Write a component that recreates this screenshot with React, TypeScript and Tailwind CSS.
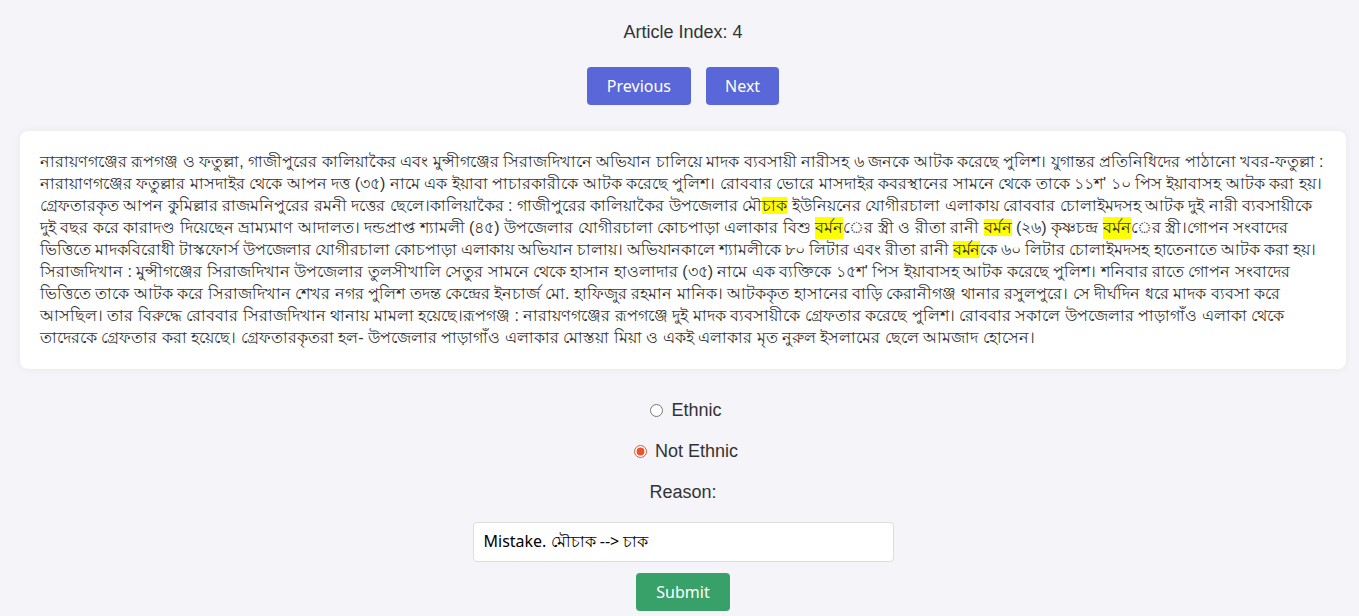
import { useState } from 'react'

// marks followed by a vowel sign are shaped apart, as in the source page
const hl = (s: string, apart = false) => (
  <mark className={apart ? 'inline-block bg-[#ffff00] text-[#333]' : 'bg-[#ffff00] text-[#333]'}>{s}</mark>
)

function Article() {
  return (
    <p className="text-[16px] leading-[22px] text-[#333]">
      নারায়ণগঞ্জের রূপগঞ্জ ও ফতুল্লা, গাজীপুরের কালিয়াকৈর এবং মুন্সীগঞ্জের সিরাজদিখানে অভিযান চালিয়ে মাদক ব্যবসায়ী নারীসহ ৬ জনকে আটক করেছে পুলিশ। যুগান্তর প্রতিনিধিদের পাঠানো খবর-ফতুল্লা : নারায়াণগঞ্জের ফতুল্লার মাসদাইর থেকে আপন দত্ত (৩৫) নামে এক ইয়াবা পাচারকারীকে আটক করেছে পুলিশ। রোববার ভোরে মাসদাইর কবরস্থানের সামনে থেকে তাকে ১১শ' ১০ পিস ইয়াবাসহ আটক করা হয়। গ্রেফতারকৃত আপন কুমিল্লার রাজমনিপুরের রমনী দত্তের ছেলে।কালিয়াকৈর : গাজীপুরের কালিয়াকৈর উপজেলার মৌ{hl('চাক')} ইউনিয়নের যোগীরচালা এলাকায় রোববার চোলাইমদসহ আটক দুই নারী ব্যবসায়ীকে দুই বছর করে কারাদণ্ড দিয়েছেন ভ্রাম্যমাণ আদালত। দন্ডপ্রাপ্ত শ্যামলী (৪৫) উপজেলার যোগীরচালা কোচপাড়া এলাকার বিশু {hl('বর্মন', true)}ের স্ত্রী ও রীতা রানী {hl('বর্মন')} (২৬) কৃষ্ণচন্দ্র {hl('বর্মন', true)}ের স্ত্রী।গোপন সংবাদের{' '}
      <span className="tracking-[-0.15px]">
        ভিত্তিতে মাদকবিরোধী টাস্কফোর্স উপজেলার যোগীরচালা কোচপাড়া এলাকায় অভিযান চালায়। অভিযানকালে শ্যামলীকে ৮০ লিটার এবং রীতা রানী {hl('বর্মন')}কে ৬০ লিটার চোলাইমদসহ হাতেনাতে আটক করা হয়।
      </span>{' '}
      সিরাজদিখান : মুন্সীগঞ্জের সিরাজদিখান উপজেলার তুলসীখালি সেতুর সামনে থেকে হাসান হাওলাদার (৩৫) নামে এক ব্যক্তিকে ১৫শ' পিস ইয়াবাসহ আটক করেছে পুলিশ। শনিবার রাতে গোপন সংবাদের ভিত্তিতে তাকে আটক করে সিরাজদিখান শেখর নগর পুলিশ তদন্ত কেন্দ্রের ইনচার্জ মো. হাফিজুর রহমান মানিক। আটককৃত হাসানের বাড়ি কেরানীগঞ্জ থানার রসুলপুরে। সে দীর্ঘদিন ধরে মাদক ব্যবসা করে আসছিল। তার বিরুদ্ধে রোববার সিরাজদিখান থানায় মামলা হয়েছে।রূপগঞ্জ : নারায়ণগঞ্জের রূপগঞ্জে দুই মাদক ব্যবসায়ীকে গ্রেফতার করেছে পুলিশ। রোববার সকালে উপজেলার পাড়াগাঁও এলাকা থেকে তাদেরকে গ্রেফতার করা হয়েছে। গ্রেফতারকৃতরা হল- উপজেলার পাড়াগাঁও এলাকার মোস্তয়া মিয়া ও একই এলাকার মৃত নুরুল ইসলামের ছেলে আমজাদ হোসেন।
    </p>
  )
}

export default function App() {
  const [choice, setChoice] = useState('not')
  const [reason, setReason] = useState('Mistake. মৌচাক --> চাক')

  return (
    <div className="w-full min-h-[616px] overflow-hidden bg-[#f4f4f9]">
      <div className="w-[1366px] flex flex-col items-center pt-[21px] text-[#333] font-['Liberation_Sans',Arial,sans-serif]">
        <h2 className="text-[18px] leading-[22px]">Article Index: 4</h2>

        <div className="flex gap-[15px] mt-[24px] font-['Noto_Sans',sans-serif]">
          <button className="h-[38px] px-[20px] rounded-[4px] bg-[#5a67d8] text-white text-[16px]">Previous</button>
          <button className="h-[38px] px-[19px] rounded-[4px] bg-[#5a67d8] text-white text-[16px]">Next</button>
        </div>

        <div className="self-stretch mx-5 mt-[26px] bg-white rounded-[8px] p-5 shadow-[0_0_10px_rgba(0,0,0,0.06)]">
          <Article />
        </div>

        <div className="flex flex-col items-center mt-[30px] text-[18px]">
          <label className="flex items-center gap-[8px] h-[22px]">
            <input
              type="radio"
              name="eth"
              checked={choice === 'eth'}
              onChange={() => setChoice('eth')}
              className="ml-[6px] w-[13px] h-[13px] accent-[#e8542c]"
            />
            Ethnic
          </label>
          <label className="flex items-center gap-[8px] h-[22px] mt-[19px]">
            <input
              type="radio"
              name="eth"
              checked={choice === 'not'}
              onChange={() => setChoice('not')}
              className="ml-[6px] w-[13px] h-[13px] accent-[#e8542c]"
            />
            Not Ethnic
          </label>
          <div className="h-[22px] mt-[17px]">Reason:</div>
        </div>

        <input
          value={reason}
          onChange={(e) => setReason(e.target.value)}
          className="mt-[21px] w-[421px] h-[40px] px-[10px] bg-white border border-[#ddd] rounded-[4px] text-[16px] text-black font-['Noto_Sans',sans-serif] outline-none"
        />

        <button className="mt-[11px] h-[38px] px-[20px] rounded-[4px] bg-[#38a169] text-white text-[16px] font-['Noto_Sans',sans-serif]">
          Submit
        </button>
      </div>
    </div>
  )
}
